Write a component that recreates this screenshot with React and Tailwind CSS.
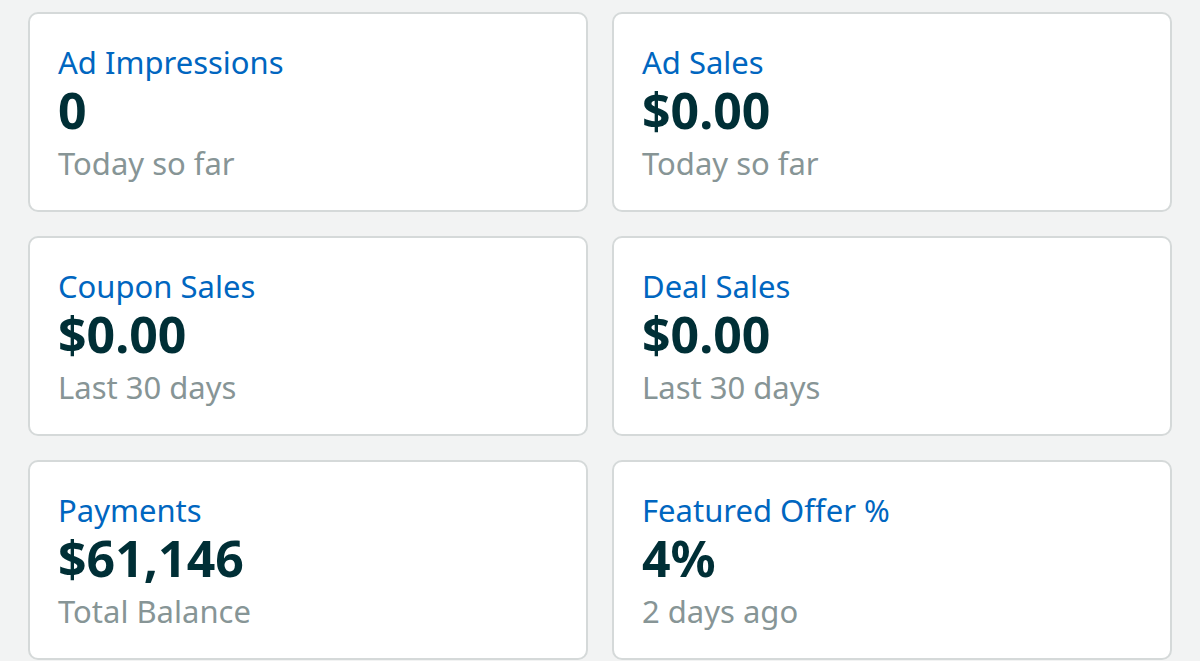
import React from "react";

const cards = [
  { title: "Ad Impressions", value: "0", sub: "Today so far" },
  { title: "Ad Sales", value: "$0.00", sub: "Today so far" },
  { title: "Coupon Sales", value: "$0.00", sub: "Last 30 days" },
  { title: "Deal Sales", value: "$0.00", sub: "Last 30 days" },
  { title: "Payments", value: "$61,146", sub: "Total Balance" },
  { title: "Featured Offer %", value: "4%", sub: "2 days ago" },
];

export default function App() {
  return (
    <div
      className="w-[1200px] h-[661px] overflow-hidden bg-[#f2f3f3] px-[28px] pt-[12px]"
      style={{ fontFamily: '"Noto Sans", "Open Sans", sans-serif' }}
    >
      <div className="grid grid-cols-2 gap-x-[24px] gap-y-[24px]">
        {cards.map((c) => (
          <div
            key={c.title}
            className="h-[200px] rounded-[10px] border-2 border-[#d5d9d9] bg-white pl-[28px] pt-[30px]"
          >
            <div className="text-[31px] leading-[36px] text-[#0066c0]">{c.title}</div>
            <div className="text-[50px] leading-[61px] font-bold text-[#002f36]">{c.value}</div>
            <div className="text-[31px] leading-[44px] text-[#879596]">{c.sub}</div>
          </div>
        ))}
      </div>
    </div>
  );
}
